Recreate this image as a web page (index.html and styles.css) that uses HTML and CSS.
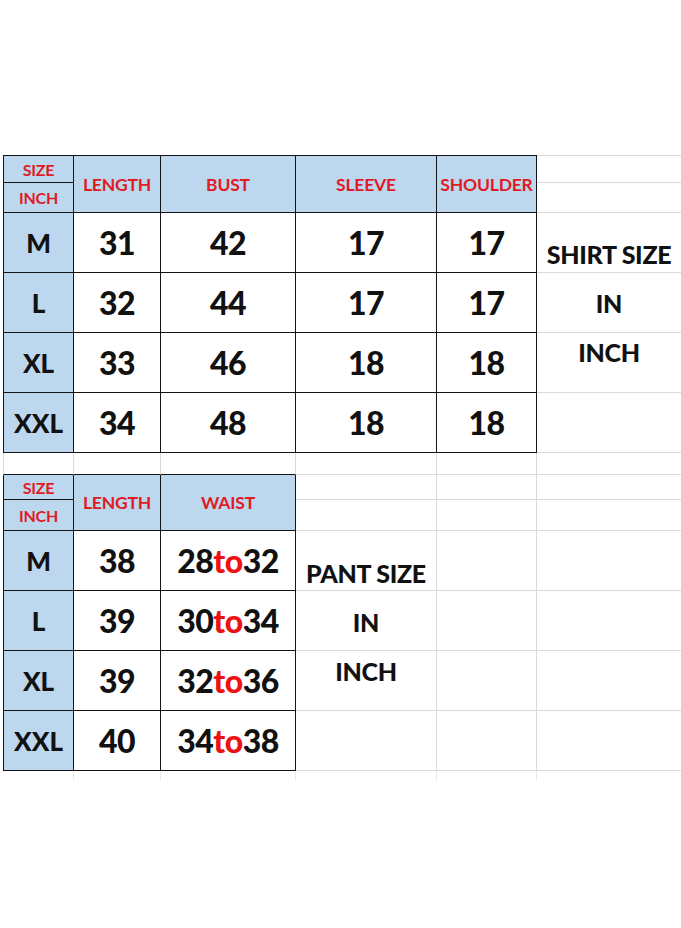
FILE: index.html
```html
<!DOCTYPE html>
<html>
<head>
<meta charset="utf-8">
<title>Size Chart</title>
<link rel="stylesheet" href="styles.css">
</head>
<body>
<div class="sheet">
  <!-- shirt table header -->
  <div class="c first-col top t hd sm">SIZE</div>
  <div class="c top t hd span2">LENGTH</div>
  <div class="c top t hd span2">BUST</div>
  <div class="c top t hd span2">SLEEVE</div>
  <div class="c top t hd span2">SHOULDER</div>
  <div class="c top last"></div>
  <div class="c first-col t hd sm">INCH</div>
  <div class="c last"></div>

  <div class="c first-col t lab">M</div>
  <div class="c t num">31</div>
  <div class="c t num">42</div>
  <div class="c t num">17</div>
  <div class="c t num">17</div>
  <div class="c last"><div class="note shirt">SHIRT SIZE<br>IN<br>INCH</div></div>

  <div class="c first-col t lab">L</div>
  <div class="c t num">32</div>
  <div class="c t num">44</div>
  <div class="c t num">17</div>
  <div class="c t num">17</div>
  <div class="c last"></div>

  <div class="c first-col t lab">XL</div>
  <div class="c t num">33</div>
  <div class="c t num">46</div>
  <div class="c t num">18</div>
  <div class="c t num">18</div>
  <div class="c last"></div>

  <div class="c first-col t lab">XXL</div>
  <div class="c t num">34</div>
  <div class="c t num">48</div>
  <div class="c t num">18</div>
  <div class="c t num">18</div>
  <div class="c last"></div>

  <!-- gap row -->
  <div class="c first-col above"></div>
  <div class="c above"></div>
  <div class="c above"></div>
  <div class="c"></div>
  <div class="c"></div>
  <div class="c last"></div>

  <!-- pant table header -->
  <div class="c first-col t hd sm">SIZE</div>
  <div class="c t hd span2">LENGTH</div>
  <div class="c t hd span2">WAIST</div>
  <div class="c"></div>
  <div class="c"></div>
  <div class="c last"></div>
  <div class="c first-col t hd sm">INCH</div>
  <div class="c"></div>
  <div class="c"></div>
  <div class="c last"></div>

  <div class="c first-col t lab">M</div>
  <div class="c t num">38</div>
  <div class="c t num">28<span class="to">to</span>32</div>
  <div class="c"><div class="note pant">PANT SIZE<br>IN<br>INCH</div></div>
  <div class="c"></div>
  <div class="c last"></div>

  <div class="c first-col t lab">L</div>
  <div class="c t num">39</div>
  <div class="c t num">30<span class="to">to</span>34</div>
  <div class="c"></div>
  <div class="c"></div>
  <div class="c last"></div>

  <div class="c first-col t lab">XL</div>
  <div class="c t num">39</div>
  <div class="c t num">32<span class="to">to</span>36</div>
  <div class="c"></div>
  <div class="c"></div>
  <div class="c last"></div>

  <div class="c first-col t lab">XXL</div>
  <div class="c t num">40</div>
  <div class="c t num">34<span class="to">to</span>38</div>
  <div class="c"></div>
  <div class="c"></div>
  <div class="c last"></div>

  <!-- faint tail of gridlines -->
  <div class="tail"></div>
  <div class="tail"></div>
  <div class="tail"></div>
  <div class="tail"></div>
  <div class="tail"></div>
  <div class="tail last"></div>
</div>
</body>
</html>
```

FILE: styles.css
```css
html, body {
  margin: 0;
  padding: 0;
  background: #ffffff;
  overflow: hidden;
}

body {
  width: 681px;
  height: 928px;
  font-family: Lato, "Open Sans", "Liberation Sans", sans-serif;
  font-weight: 700;
  color: #111111;
}

.sheet {
  display: grid;
  grid-template-columns: 71px 87px 135px 141px 100px 144px;
  grid-template-rows: 28px 30px 60px 60px 60px 60px 22px 25px 31px 60px 60px 60px 60px 10px;
  margin: 155px 0 0 3px;
  width: 678px;
}

.c {
  box-sizing: border-box;
  border-right: 1px solid #dadada;
  border-bottom: 1px solid #dadada;
  display: flex;
  align-items: center;
  justify-content: center;
  text-align: center;
  min-width: 0;
}

.c.top { border-top: 1px solid #dadada; }
.c.first-col { border-left: 1px solid #dadada; }
.c.last { border-right: none; align-items: flex-start; justify-content: center; }

/* dark bordered table cells */
.c.t {
  border-right-color: #141414;
  border-bottom-color: #141414;
}
.c.t.top { border-top-color: #141414; }
.c.t.first-col { border-left-color: #141414; }
.c.above { border-bottom-color: #141414; }

.hd {
  background: #bdd7ee;
  color: #e01b24;
  font-size: 17.5px;
  letter-spacing: -0.2px;
}
.hd.sm { font-size: 16px; }
.span2 { grid-row: span 2; }

.lab {
  background: #bdd7ee;
  font-size: 26px;
  font-weight: 900;
}

.num {
  font-size: 32px;
  font-weight: 900;
  letter-spacing: -0.5px;
}

.to { color: #ee1111; }

.note {
  font-size: 25px;
  font-weight: 900;
  line-height: 49px;
  white-space: nowrap;
  text-align: center;
  letter-spacing: -0.3px;
}
.note.shirt { padding-top: 17px; }
.note.pant { padding-top: 18px; }

.c:has(.note) { align-items: flex-start; overflow: visible; }

.tail {
  border-right: 1px solid #ececec;
}
.tail.last { border-right: none; }
```
